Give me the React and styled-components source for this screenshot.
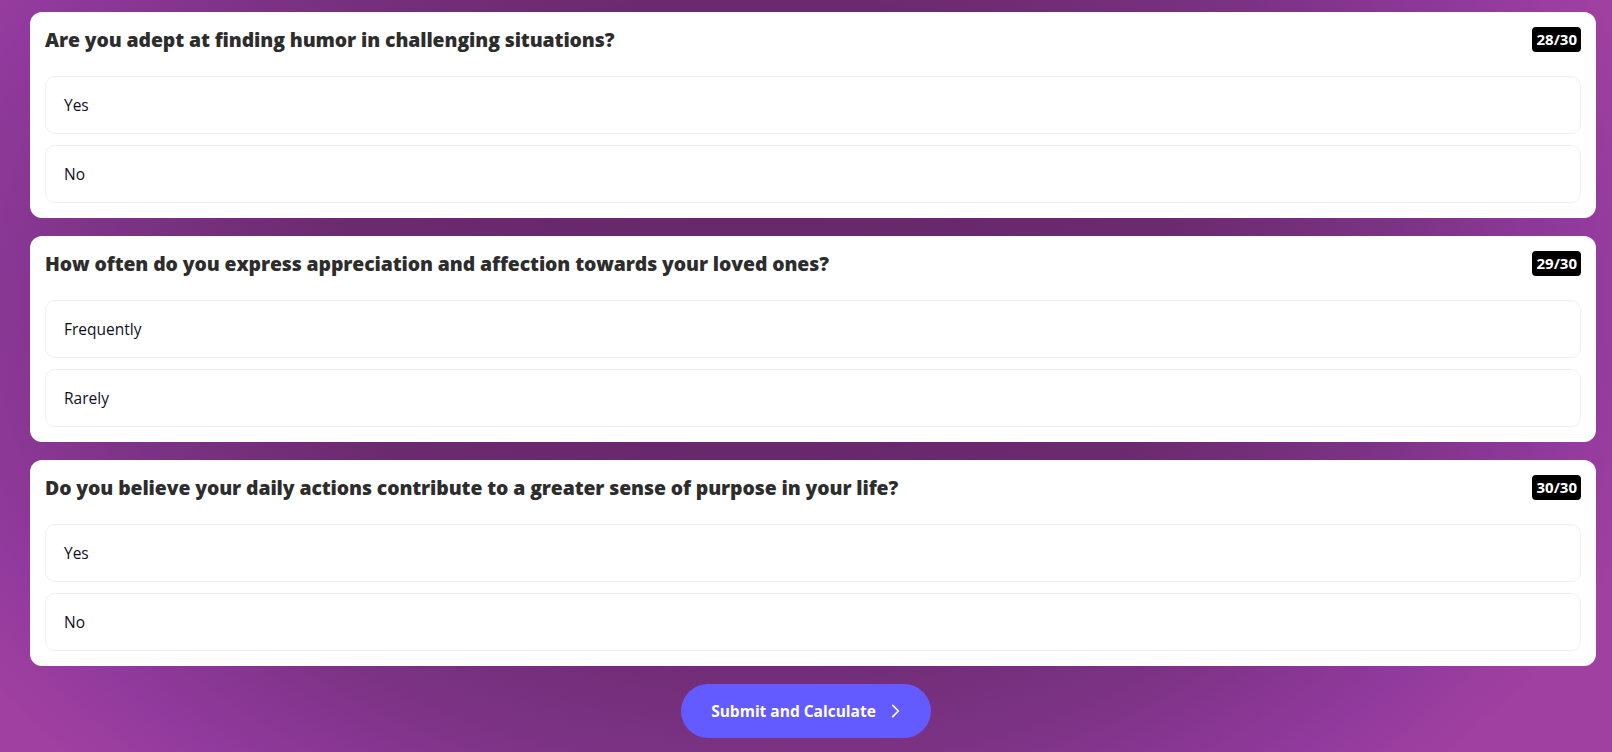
import React from 'react';
import styled, { createGlobalStyle } from 'styled-components';

const GlobalStyle = createGlobalStyle`
  html, body {
    margin: 0;
    padding: 0;
  }
  body {
    font-family: "Open Sans", "Noto Sans", sans-serif;
    background: #6a2a6e;
  }
`;

const Page = styled.div`
  min-height: 752px;
  box-sizing: border-box;
  padding: 12px 0 14px;
  background:
    radial-gradient(ellipse 58% 90% at 47% 40%, #67276b 0%, #6b2a6f 45%, #7b3283 68%, #913a9d 88%, #a040a0 100%);
`;

const QuestionList = styled.div`
  display: flex;
  flex-direction: column;
  gap: 18px;
  padding: 0 16px 0 30px;
`;

const Card = styled.section`
  background: #fff;
  border-radius: 12px;
  padding: 15px;
`;

const CardHeader = styled.div`
  display: flex;
  align-items: center;
  justify-content: space-between;
  height: 25px;
  margin-bottom: 24px;
`;

const Title = styled.h2`
  margin: 0;
  font-size: 19.4px;
  font-weight: 800;
  color: #2d2d2d;
  letter-spacing: -0.1px;
`;

const Counter = styled.span`
  background: #000;
  color: #fff;
  font-size: 15px;
  font-weight: 700;
  border-radius: 4px;
  padding: 0 4px;
  height: 25px;
  line-height: 25px;
`;

const Options = styled.div`
  display: flex;
  flex-direction: column;
  gap: 11px;
`;

const Option = styled.div`
  height: 58px;
  box-sizing: border-box;
  display: flex;
  align-items: center;
  padding: 0 18px;
  border: 1px solid #f0f0f0;
  border-radius: 10px;
  font-size: 15.5px;
  font-weight: 500;
  color: #0f0f1e;
`;

const Footer = styled.div`
  display: flex;
  justify-content: center;
  margin-top: 18px;
`;

const SubmitButton = styled.button`
  display: flex;
  align-items: center;
  gap: 10px;
  height: 54px;
  padding: 0 27px 0 30px;
  border: none;
  border-radius: 27px;
  background: #635bff;
  color: #fff;
  font-family: inherit;
  font-size: 15.5px;
  font-weight: 700;
  cursor: pointer;
`;

const questions = [
  { id: 28, text: 'Are you adept at finding humor in challenging situations?', options: ['Yes', 'No'] },
  { id: 29, text: 'How often do you express appreciation and affection towards your loved ones?', options: ['Frequently', 'Rarely'] },
  { id: 30, text: 'Do you believe your daily actions contribute to a greater sense of purpose in your life?', options: ['Yes', 'No'] },
];

const Chevron = () => (
  <svg width="18" height="18" viewBox="0 0 24 24" fill="none" stroke="currentColor" strokeWidth="2.2" strokeLinecap="round" strokeLinejoin="round">
    <path d="M9 4.5l7.5 7.5-7.5 7.5" />
  </svg>
);

const App = () => (
  <Page>
    <GlobalStyle />
    <QuestionList>
      {questions.map((q) => (
        <Card key={q.id}>
          <CardHeader>
            <Title>{q.text}</Title>
            <Counter>{q.id}/30</Counter>
          </CardHeader>
          <Options>
            {q.options.map((opt) => <Option key={opt}>{opt}</Option>)}
          </Options>
        </Card>
      ))}
    </QuestionList>
    <Footer>
      <SubmitButton>
        Submit and Calculate
        <Chevron />
      </SubmitButton>
    </Footer>
  </Page>
);

export default App;
